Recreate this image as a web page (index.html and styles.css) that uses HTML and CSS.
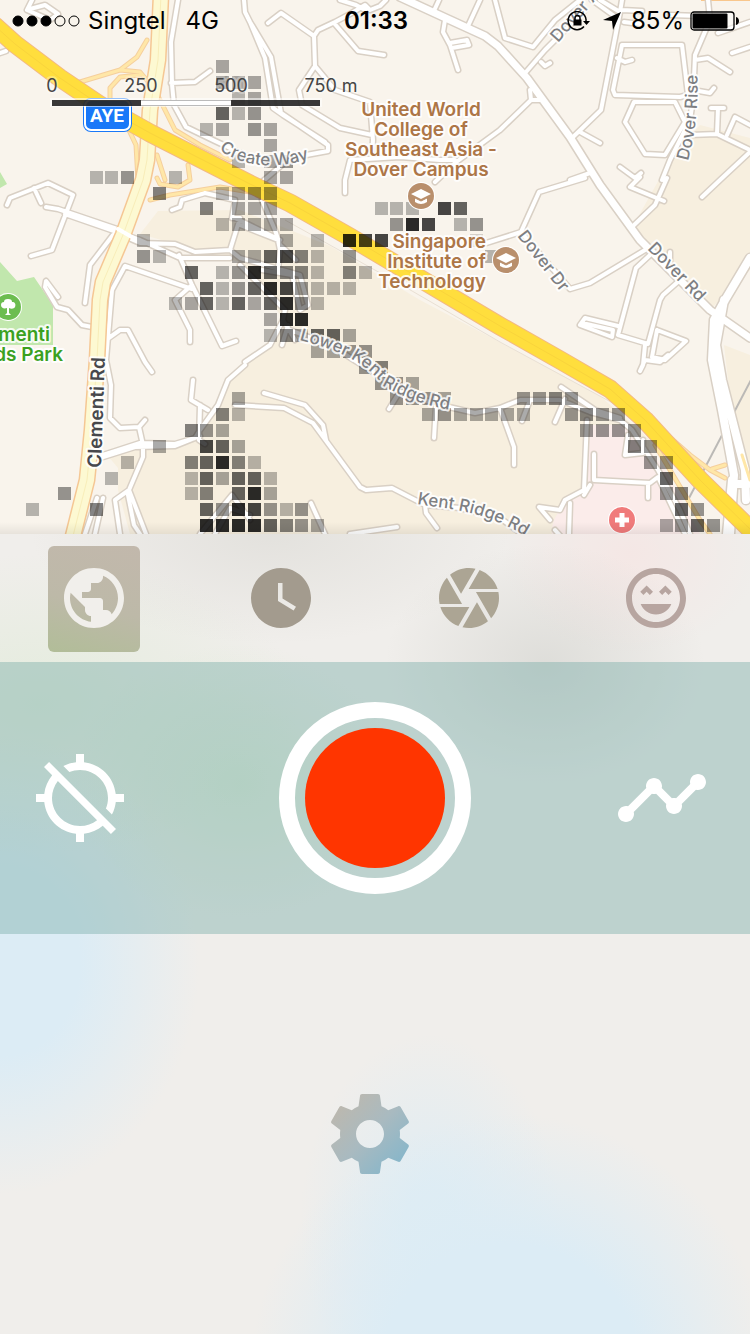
FILE: index.html
```html
<!DOCTYPE html>
<html lang="en">
<head>
<meta charset="utf-8">
<meta name="viewport" content="width=device-width, initial-scale=1">
<title>Map recorder</title>
<link rel="stylesheet" href="styles.css">
</head>
<body>
<section class="map">
  <svg class="map-canvas" viewBox="0 0 750 534" preserveAspectRatio="xMidYMid slice" role="img" aria-label="Map of Dover and Kent Ridge">
    <defs>
      <path id="minor" d="M32 0L27 10L50 20L58 14L45 5L30 9M0 53L6 51M178 0L171 42L172 84L174 105L186 127L215 141L260 162M171 83L195 82L210 71M244 0L245 12L250 22L271 57L281 113L328 145L328 151L290 158L262 182M250 22L265 58L273 108L283 115L325 142M268 23L281 13L314 36L318 30L335 22L350 14L365 5L370 10L380 6L386 0M340 0L356 5L365 10M314 36L315 66L299 90L302 105L340 128L372 135M315 66L335 90L370 102L373 140L372 155M334 23L358 51L384 55M433 13L439 0M445 20L443 32L450 45L458 70M450 43L467 40L469 45L452 48M468 26L480 0M495 0L505 38L533 47L555 20L580 0M526 72L545 50L585 10M541 62L545 66L550 63M500 130L531 100L530 90M531 100L540 100M600 0L620 12L622 0M592 0L617 18M620 12L601 110L572 138M580 132L600 143M622 45L682 45L688 95L680 97L615 95L613 90L622 45M617 58L625 62L632 60M634 102L675 102L685 122L665 155L645 154L625 122ZM708 0L710 20L695 55L693 100L690 120L670 160L662 180M695 60L708 58L730 72M622 10L642 11M624 22L640 24M670 15L700 16M750 22L718 33M750 47L732 53M693 90L710 93L714 88M690 135L717 134L718 108M711 108L724 108M717 134L750 150M727 135L735 117L750 125M750 152L720 180L702 197M620 167L635 178L641 173M570 180L590 173M345 193L345 180L350 160L400 157L440 160L455 160M500 130L455 163L435 182M480 245L521 232L539 192L585 178M521 232L570 289L590 283L645 250M640 177L630 187L664 201M667 178L655 205L633 226M650 255L636 268L618 335L648 344L660 300L663 295L680 280M670 252L670 262M618 326L585 318L580 325L612 337L613 330L582 323M657 330L686 341L665 360L652 357L657 330M645 345L643 365L640 371L645 360L660 362L668 355M7 205L10 198L48 183L73 195L52 250L31 256M34 188L41 203M46 207L58 209L120 230M65 214L140 240L180 258L230 258M115 232L140 243L175 244L195 252L230 250L240 258M230 250L240 218L232 218L235 200L205 193L182 200L180 207L172 210M235 218L280 240M179 255L192 285L222 346L236 341M192 285L175 300L190 330L190 342M192 289L125 266L112 290L106 360L111 385L110 418L120 428L139 427L145 420M139 427L143 445L143 457L129 490L115 500L120 534M113 235L90 265L85 303M58 297L46 281L45 287L57 307L68 310L82 325L92 327M106 340L120 330L128 330L145 362L152 372M100 456L140 443L175 444L195 438L200 430L218 405L228 380L245 365M100 458L135 447L175 446L200 436M193 380L191 400L208 410M200 405L199 440L205 444M129 490L146 534M128 495L134 525L140 534M103 498L95 534M97 498L85 534M240 225L278 240L280 250L278 270M240 258L300 275L308 305L300 310L292 275L262 270M240 265L285 310L283 320L270 345L245 362M262 200L275 230L280 245L296 260M283 320L295 340M288 325L282 345M290 330L330 345L370 370L400 392L440 405L475 413L500 408L520 400L560 400L590 412L620 420L632 430L658 470L680 510L690 534M397 396L389 409M436 405L434 438M500 408L514 447L514 465M530 400L522 421M565 399L555 422M561 387L595 410L620 418M264 393L305 405L323 425L326 440M235 405L284 408L313 423L360 487L366 490L392 488L425 505L426 513L437 528M311 503L325 534M350 534L397 527M425 505L460 508L500 518L530 540M587 420L584 490L565 500L560 510L539 507L550 520M570 503L569 534M594 454L594 480L650 483L658 477L685 534M648 483L648 498M628 435L625 455L643 453L643 440M590 485L584 495M200 534L232 495L250 520M215 534L230 508L250 515M555 530L562 538"/>
      <path id="wide" d="M400 -3L450 20L485 36L498 46L527 78L570 137L600 185L640 240L710 310L750 338"/>
      <path id="trunk" d="M750 258L725 300L714 320L712 360L722 410L734 475L730 534M724 300L716 345L722 380L745 470L746 500M734 484L748 484M732 480L727 534"/>
      <path id="ramps" d="M80 82L120 70L140 72L155 90L175 130L200 145L230 160M120 70L137 57L147 40M110 105L110 88L120 77L140 75M128 128L136 145L138 180L137 190M150 200L170 195L220 187L250 192M157 155L165 180M188 165L190 180L178 187L160 184L157 178M650 420L690 455L710 470L725 478M712 469L725 465M655 445L700 520L710 534M742 455L750 480"/>
      <path id="clementi" d="M161 -5L158 60L150 110L147 160L143 180L123 235L103 282L100 300L97 360L92 430L87 480L72 540"/>
      <path id="expressway" d="M-5 26L15 44L60 78L100 105L150 133L250 184L290 203L350 237L500 326L560 360L610 389L645 420L700 480L755 534"/>
      <path id="curve-create" d="M219 150Q258 176 312 158"/>
      <path id="curve-lower" d="M299 340C345 352 365 363 385 387C405 398 430 408 460 411"/>
      <path id="curve-kent" d="M417 504C450 510 490 508 545 550"/>
      <path id="curve-rise" d="M688 161Q700 118 697 65"/>
      <path id="curve-dr" d="M517 236L567 300"/>
      <path id="curve-rd" d="M647 249L705 309"/>
      <path id="curve-top" d="M558 43L615 -22"/>
      <g id="campus">
        <circle r="14" fill="#fff"/><circle r="13" fill="#b98f6c"/>
        <path d="M-10-2L0-7L10-2L0 3ZM-6 2L0 5L6 2V6Q0 10-6 6ZM-9-1V5" fill="#fff"/>
        <path d="M-6 2L0 5L6 2" fill="none" stroke="#b98f6c"/>
      </g>
    </defs>
    <rect width="750" height="534" fill="#f9f4ec"/>
    <path class="land" d="M140 234L158 211L240 210L330 246L420 300L560 374L600 396L650 440L640 534H130L118 490V468L108 456L165 444L195 440L230 380L288 325L240 262ZM670 160L700 125L750 138V270L712 308L633 226ZM724 345L750 355V500L736 450Z"/>
    <path class="hospital" d="M583 425H630L665 470L700 534H552Q550 510 582 494Z"/>
    <path class="park" d="M0 172L7 184L0 188ZM0 262L17 281L34 277L53 305V345H0Z"/>
    <path class="rail" d="M752 378L688 500"/>
    <path class="boundary" d="M285 220L400 284L500 342L620 407"/>
    <path class="exit" d="M701 0H750"/>
    <use href="#minor" class="casing"/><use href="#wide" class="casing casing-wide"/><use href="#trunk" class="casing casing-trunk"/>
    <use href="#ramps" class="ramp-casing"/>
    <use href="#minor" class="road"/>
    <use href="#wide" class="road road-wide"/><use href="#trunk" class="road road-trunk"/>
    <use href="#ramps" class="ramp"/>
    <use href="#clementi" class="clementi-casing"/><use href="#clementi" class="clementi"/><use href="#clementi" class="clementi-line"/>
    <path class="road" d="M118 229L137 240M100 456L118 451"/>
    <use href="#expressway" class="expressway-casing"/><use href="#expressway" class="expressway"/><use href="#expressway" class="expressway-line"/>
    <g id="heat"></g>

    <use href="#campus" x="421" y="196"/><use href="#campus" x="506" y="260"/>
    <circle cx="8" cy="307" r="14" fill="#fff"/><circle cx="8" cy="307" r="13" fill="#6cbd50"/>
    <path d="M8 299c3 0 4 1 4 3 3 0 4 2 3 5-1 2-4 2-6 1v5l2 2H5l2-2v-5c-3 1-6 0-6-3 0-2 1-3 3-3 0-2 1-3 4-3z" fill="#fff"/>
    <circle cx="622" cy="520" r="14" fill="#fff"/><circle cx="622" cy="520" r="13" fill="#f07b7b"/>
    <path d="M622 513V527M615 520H629" stroke="#fff" stroke-width="5"/>

    <g class="label street">
      <text><textPath href="#curve-create">Create Way</textPath></text>
      <text><textPath href="#curve-lower">Lower Kent Ridge Rd</textPath></text>
      <text><textPath href="#curve-kent">Kent Ridge Rd</textPath></text>
      <text><textPath href="#curve-rise">Dover Rise</textPath></text>
      <text><textPath href="#curve-dr">Dover Dr</textPath></text>
      <text><textPath href="#curve-rd">Dover Rd</textPath></text>
      <text><textPath href="#curve-top">Dover Av</textPath></text>
    </g>
    <text class="label avenue" transform="translate(101 468) rotate(-88)">Clementi Rd</text>
    <g class="label place" text-anchor="middle">
      <text x="421" y="116">United World</text><text x="421" y="136">College of</text>
      <text x="421" y="156">Southeast Asia -</text><text x="421" y="176">Dover Campus</text>
    </g>
    <g class="label place" text-anchor="end">
      <text x="486" y="248">Singapore</text><text x="486" y="268">Institute of</text><text x="486" y="288">Technology</text>
    </g>
    <g class="label green">
      <text x="50" y="341" text-anchor="end">Clementi</text><text x="63" y="361" text-anchor="end">Woods Park</text>
    </g>

    <rect x="83" y="98" width="49" height="34" rx="8" fill="#1a78f8"/>
    <rect x="85" y="100" width="45" height="30" rx="6" fill="#1a78f8" stroke="#fff" stroke-width="2"/>
    <text class="shield" x="107" y="122" text-anchor="middle">AYE</text>
    <rect x="50" y="98" width="272" height="9" fill="#fff" opacity=".55"/>
    <path d="M52 103H141M231 103H320" stroke="#111" stroke-opacity=".83" stroke-width="6"/>
    <path d="M141 103H231" stroke="#bbb" stroke-width="6"/><path d="M141 103H231" stroke="#fff" stroke-width="4"/>
    <g class="label scale" text-anchor="middle">
      <text x="52" y="92">0</text><text x="141" y="92">250</text><text x="231" y="92">500</text><text x="331" y="92">750 m</text>
    </g>
  </svg>
  <header class="status">
    <div class="status-side">
      <svg class="signal" viewBox="0 0 70 12" role="img" aria-label="Signal 3 of 5"><g stroke="#000"><circle cx="6" cy="6" r="5"/><circle cx="20" cy="6" r="5"/><circle cx="34" cy="6" r="5"/><g fill="none"><circle cx="48" cy="6" r="5"/><circle cx="62" cy="6" r="5"/></g></g></svg>
      <span class="carrier">Singtel</span><span>4G</span>
    </div>
    <time class="clock">01:33</time>
    <div class="status-side status-right">
      <svg class="lock" viewBox="0 0 24 20" role="img" aria-label="Rotation locked"><path d="M19 8A9 9 0 1 0 17 15.500M19 8V11" fill="none" stroke="#000" stroke-width="1.500"/><path d="M16 10H23L19.500 14ZM6.500 8.500H14.500V14.500H6.500Z"/><path d="M8 9V7a2.500 2.500 0 0 1 5 0V9" fill="none" stroke="#000" stroke-width="1.500"/></svg>
      <svg class="arrow" viewBox="0 0 18 18" role="img" aria-label="Location in use"><path d="M18 0L10 18L9 9L0 8Z"/></svg>
      <span class="percent">85%</span>
      <svg class="battery" viewBox="0 0 50 20" aria-hidden="true"><rect x="1" y="1" width="43" height="18" rx="3" fill="#fff" fill-opacity=".5" stroke="#000" stroke-width="1.300"/><rect x="2.500" y="2.500" width="35" height="15" rx="1"/><path d="M46 6C50 7 50 13 46 14Z"/></svg>
    </div>
  </header>
</section>

<main class="panel">
  <nav class="tabs" aria-label="Filters">
    <button class="tab tab-active" type="button" aria-label="World" aria-pressed="true"><svg class="icon" viewBox="0 0 24 24"><path d="M12 2C6.480 2 2 6.480 2 12s4.480 10 10 10 10-4.480 10-10S17.520 2 12 2zm-1 17.930c-3.950-.49-7-3.850-7-7.930 0-.62.080-1.210.21-1.790L9 15v1c0 1.100.9 2 2 2v1.930zm6.900-2.540c-.26-.81-1-1.390-1.900-1.390h-1v-3c0-.55-.45-1-1-1H8v-2h2c.55 0 1-.45 1-1V7h2c1.100 0 2-.9 2-2v-.41c2.930 1.190 5 4.060 5 7.410 0 2.080-.8 3.970-2.100 5.390z"/></svg></button>
    <button class="tab tab-time" type="button" aria-label="Time"><svg class="icon" viewBox="0 0 24 24"><path d="M12 2C6.500 2 2 6.500 2 12s4.500 10 10 10 10-4.500 10-10S17.500 2 12 2zm4.200 14.200L11 13V7h1.500v5.200l4.500 2.700-.8 1.300z"/></svg></button>
    <button class="tab tab-camera" type="button" aria-label="Camera"><svg class="icon" viewBox="0 0 24 24"><path d="M9.400 10.500l4.770-8.260C13.470 2.090 12.750 2 12 2c-2.400 0-4.600.85-6.320 2.250l3.660 6.350.06-.1zM21.540 9c-.92-2.920-3.150-5.260-6-6.340L11.880 9h9.660zm.26 1h-7.490l.29.5 4.760 8.250C21 16.970 22 14.610 22 12c0-.69-.07-1.350-.2-2zM8.540 12l-3.900-6.750C3.010 7.030 2 9.390 2 12c0 .69.07 1.350.2 2h7.490l-1.150-2zm-6.080 3c.92 2.920 3.150 5.260 6 6.340L12.120 15H2.460zm11.270 0l-3.900 6.760c.7.15 1.420.24 2.170.24 2.400 0 4.600-.85 6.320-2.250l-3.660-6.350-.93 1.600z"/></svg></button>
    <button class="tab tab-mood" type="button" aria-label="Mood"><svg class="icon" viewBox="0 0 24 24"><path d="M11.990 2C6.470 2 2 6.470 2 12s4.470 10 9.990 10S22 17.530 22 12 17.520 2 11.990 2zM12 20c-4.420 0-8-3.580-8-8s3.580-8 8-8 8 3.580 8 8-3.580 8-8 8zm1-10.060L14.060 11l1.060-1.060L16.180 11l1.060-1.060-2.120-2.120L13 9.940zm-4.120 0L9.940 11 11 9.940 8.880 7.820 6.760 9.940 7.820 11l1.060-1.060zM12 17.500c2.330 0 4.310-1.460 5.110-3.500H6.890c.8 2.040 2.780 3.500 5.110 3.500z"/></svg></button>
  </nav>
  <section class="recorder" aria-label="Recorder">
    <button class="action" type="button" aria-label="Location off"><svg class="icon-large" viewBox="0 0 24 24"><path d="M20.940 11c-.46-4.170-3.770-7.480-7.940-7.940V1h-2v2.060c-1.130.12-2.190.46-3.160.97l1.500 1.500C10.160 5.190 11.060 5 12 5c3.870 0 7 3.130 7 7 0 .94-.19 1.840-.52 2.650l1.500 1.500c.5-.96.84-2.020.97-3.150H23v-2h-2.060zM3 4.270l2.040 2.040C3.970 7.620 3.250 9.230 3.060 11H1v2h2.060c.46 4.170 3.770 7.480 7.940 7.940V23h2v-2.060c1.770-.2 3.380-.91 4.690-1.980L19.730 21 21 19.730 4.270 3 3 4.270zm13.270 13.270C15.090 18.450 13.610 19 12 19c-3.870 0-7-3.130-7-7 0-1.610.55-3.090 1.460-4.270l9.810 9.810z"/></svg></button>
    <button class="record" type="button" aria-label="Record"><span class="record-dot"></span></button>
    <button class="action action-end" type="button" aria-label="Timeline"><svg class="icon-large" viewBox="0 0 24 24"><path d="M23 8c0 1.100-.9 2-2 2-.18 0-.35-.02-.51-.07l-3.560 3.550c.05.16.07.34.07.52 0 1.100-.9 2-2 2s-2-.9-2-2c0-.18.02-.36.07-.52l-2.550-2.550c-.16.05-.34.07-.52.07s-.36-.02-.52-.07l-4.550 4.560c.05.16.07.33.07.51 0 1.100-.9 2-2 2s-2-.9-2-2 .9-2 2-2c.18 0 .35.02.51.07l4.560-4.550C8.020 9.360 8 9.180 8 9c0-1.100.9-2 2-2s2 .9 2 2c0 .18-.02.36-.07.52l2.550 2.550c.16-.05.34-.07.52-.07s.36.02.52.07l3.550-3.560C19.020 8.350 19 8.180 19 8c0-1.100.9-2 2-2s2 .9 2 2z"/></svg></button>
  </section>
  <footer class="settings">
    <button class="action" type="button" aria-label="Settings"><svg class="icon-large" viewBox="0 0 24 24"><defs><linearGradient id="gear" x1="0" y1="0" x2="1" y2="1"><stop offset=".1" stop-color="#bdb8ae"/><stop offset=".5" stop-color="#a9bac0"/><stop offset=".9" stop-color="#86b6ca"/></linearGradient></defs><path fill="url(#gear)" d="M19.430 12.980c.04-.32.07-.64.07-.98s-.03-.66-.07-.98l2.110-1.650c.19-.15.24-.42.12-.64l-2-3.460c-.12-.22-.39-.3-.61-.22l-2.490 1c-.52-.4-1.080-.73-1.690-.98l-.38-2.650C14.460 2.180 14.250 2 14 2h-4c-.25 0-.46.18-.49.42l-.38 2.650c-.61.25-1.170.59-1.690.98l-2.490-1c-.23-.09-.49 0-.61.22l-2 3.460c-.13.22-.07.49.12.64l2.110 1.650c-.04.32-.07.65-.07.98s.03.66.07.98l-2.110 1.650c-.19.15-.24.42-.12.64l2 3.460c.12.22.39.3.61.22l2.490-1c.52.4 1.080.73 1.690.98l.38 2.650c.03.24.24.42.49.42h4c.25 0 .46-.18.49-.42l.38-2.650c.61-.25 1.170-.59 1.690-.98l2.490 1c.23.09.49 0 .61-.22l2-3.460c.12-.22.07-.49-.12-.64l-2.110-1.650zM12 15.500c-1.930 0-3.500-1.570-3.500-3.500s1.570-3.500 3.500-3.500 3.500 1.570 3.500 3.500-1.570 3.500-3.500 3.500z"/></svg></button>
  </footer>
</main>
<script src="heat.js"></script>
</body>
</html>
```
FILE: styles.css
```css
* { box-sizing: border-box; }
body {
  margin: 0;
  min-height: 100vh;
  display: flex;
  flex-direction: column;
  background: #efeeec;
  font-family: Inter, "Liberation Sans", sans-serif;
}
button { padding: 0; border: 0; background: none; display: grid; place-items: center; cursor: pointer; }
svg { display: block; }

/* Map */
.map { position: relative; aspect-ratio: 750 / 534; overflow: hidden; }
.map::after {
  content: "";
  position: absolute;
  inset: auto 0 0;
  height: 12px;
  background: linear-gradient(transparent, rgba(0, 0, 0, .07));
}
.map-canvas { width: 100%; height: 100%; }
.land { fill: #f7efdf; }
.hospital { fill: #fbecea; }
.park { fill: #c1e7ad; }
.rail { stroke: #bbb9b6; stroke-width: 2; }
.boundary { fill: none; stroke: #e9e0d4; }
.exit { stroke: #f9c78c; stroke-width: 2; }
.casing, .road, .ramp, .ramp-casing, .clementi, .clementi-casing, .clementi-line,
.expressway, .expressway-casing, .expressway-line { fill: none; stroke-linecap: round; stroke-linejoin: round; }
.casing { stroke: #d9d0c5; stroke-width: 7; }
.casing-wide { stroke-width: 10; }
.casing-trunk { stroke-width: 11; }
.road { stroke: #fff; stroke-width: 4; }
.road-wide { stroke-width: 7; }
.road-trunk { stroke-width: 8; }
.ramp-casing { stroke: #f5cf9d; stroke-width: 5; }
.ramp { stroke: #ffe7a8; stroke-width: 3; }
.clementi-casing { stroke: #f5c794; stroke-width: 17; }
.clementi { stroke: #fdf9d2; stroke-width: 14; }
.clementi-line { stroke: #f8edb9; stroke-width: 1; }
.expressway-casing { stroke: #f3b983; stroke-width: 19; }
.expressway { stroke: #ffde3d; stroke-width: 17; }
.expressway-line { stroke: #f9d43c; stroke-width: 1; }

.label { font-size: 18px; font-weight: 500; paint-order: stroke; stroke: #fff; stroke-opacity: .85; stroke-width: 4px; stroke-linejoin: round; }
.street { fill: #7e7f82; font-size: 17px; }
.avenue { fill: #47484c; font-size: 19px; font-weight: 600; }
.place { fill: #ad7647; font-size: 19px; font-weight: 600; }
.green { fill: #3ba11f; font-size: 19px; font-weight: 600; }
.scale { fill: #454545; font-weight: 400; stroke-opacity: .3; }
.shield { fill: #fff; font: 700 19px Roboto, sans-serif; }

/* Status bar */
.status {
  position: absolute;
  inset: 0 0 auto;
  height: 42px;
  padding: 0 10px 0 12px;
  display: grid;
  grid-template-columns: 1fr auto 1fr;
  align-items: center;
  font-size: 24px;
  line-height: 42px;
}
.status-side { display: flex; align-items: center; }
.status-right { justify-content: flex-end; }
.signal { width: 70px; height: 12px; margin-right: 6px; }
.carrier { margin-right: 20px; }
.clock { font-weight: 600; }
.lock { width: 24px; height: 20px; margin-right: 12px; }
.arrow { width: 18px; height: 18px; margin-right: 10px; }
.percent { margin-right: 6px; }
.battery { width: 50px; height: 20px; }

/* Panel */
.panel {
  flex: 1;
  display: flex;
  flex-direction: column;
  background:
    radial-gradient(ellipse 160px 120px at 545px 130px, rgba(150, 155, 148, .2), transparent),
    radial-gradient(ellipse 240px 110px at 270px 0, rgba(160, 160, 150, .16), transparent),
    radial-gradient(ellipse 130px 100px at 630px 20px, rgba(255, 215, 215, .3), transparent),
    radial-gradient(ellipse 260px 150px at 40px 170px, rgba(205, 232, 195, .35), transparent),
    radial-gradient(ellipse 170px 140px at 240px 250px, rgba(205, 232, 195, .45), transparent),
    radial-gradient(ellipse 200px 230px at 0 430px, rgba(220, 236, 245, 1) 40%, rgba(220, 236, 245, 0)),
    radial-gradient(ellipse 260px 260px at 510px 840px, rgba(220, 236, 245, 1) 50%, rgba(220, 236, 245, 0)),
    radial-gradient(ellipse 130px 190px at 430px 690px, rgba(220, 236, 245, .8) 20%, rgba(220, 236, 245, 0)),
    #f0eeeb;
}
.tabs { display: grid; grid-template-columns: repeat(4, 1fr); justify-items: center; height: 128px; padding-top: 12px; }
.tab { width: 92px; height: 106px; padding-bottom: 2px; border-radius: 6px; }
.tab-active { background: linear-gradient(15deg, #b1bd98 0, #bdb9a8 45%, #c2b8ac 100%); fill: #f1efeb; }
.tab-time { fill: #a39b8e; }
.tab-camera { fill: #aca594; }
.tab-mood { fill: #b7a5a0; }
.icon { width: 72px; height: 72px; }
.icon-large { width: 96px; height: 96px; }
.recorder {
  height: 272px;
  padding: 0 32px;
  display: grid;
  grid-template-columns: 1fr auto 1fr;
  align-items: center;
  background: rgba(120, 172, 168, .42);
}
.recorder .action { fill: #fff; justify-self: start; }
.recorder .action-end { justify-self: end; margin-right: 8px; }
.record { width: 192px; height: 192px; border: 16px solid #fff; border-radius: 50%; }
.record-dot { width: 140px; height: 140px; border-radius: 50%; background: #ff3500; }
.settings { flex: 1; min-height: 200px; display: grid; place-items: center; padding-right: 10px; }
```
FILE: heat.js
```javascript
// Each run: row, first column, then one shade digit per cell (0 = empty).
const runs = [
  [0, 12, "4"], [1, 12, "544"], [2, 13, "34"], [3, 12, "735"], [4, 11, "34054"],
  [5, 15, "4"], [6, 13, "3045"], [7, 4, "335003"], [7, 15, "44"], [8, 8, "6"], [8, 12, "3455"],
  [9, 11, "60444"], [9, 22, "333087"], [10, 12, "34444"], [10, 23, "598035"],
  [11, 7, "3"], [11, 16, "403"], [11, 20, "988"], [11, 28, "2"],
  [12, 7, "53"], [12, 13, "44786305"], [12, 29, "3"],
  [13, 10, "703597663063"], [14, 11, "7357985333"], [15, 9, "3473747963"],
  [16, 15, "499"], [17, 15, "364774"], [18, 18, "4455"], [19, 21, "56"], [20, 22, "554"],
  [21, 13, "4"], [21, 23, "5554"], [21, 31, "5565"],
  [22, 12, "63"], [22, 25, "4544444"], [22, 34, "5655"],
  [23, 10, "654"], [23, 35, "5555"], [24, 8, "4"], [24, 11, "874"], [24, 38, "65"],
  [25, 6, "3"], [25, 10, "67963"], [25, 39, "55"], [26, 5, "3"], [26, 10, "374773"], [26, 40, "7"],
  [27, 2, "5"], [27, 10, "360794"], [27, 40, "56"],
  [28, 0, "3"], [28, 4, "6"], [28, 11, "7598535"], [28, 41, "75"],
  [29, 11, "99997654"], [29, 40, "4575"]
];
const opacity = { 2: 0.15, 3: 0.27, 4: 0.33, 5: 0.4, 6: 0.48, 7: 0.6, 8: 0.72, 9: 0.83 };
const pitch = 15.83;
const heat = document.getElementById("heat");
for (const [row, first, shades] of runs) {
  [...shades].forEach((shade, i) => {
    if (shade === "0") return;
    const cell = document.createElementNS("http://www.w3.org/2000/svg", "rect");
    cell.setAttribute("x", Math.round(26.3 + pitch * (first + i)));
    cell.setAttribute("y", Math.round(60 + pitch * row));
    cell.setAttribute("width", 13);
    cell.setAttribute("height", 13);
    cell.setAttribute("fill-opacity", opacity[shade]);
    heat.append(cell);
  });
}
```
